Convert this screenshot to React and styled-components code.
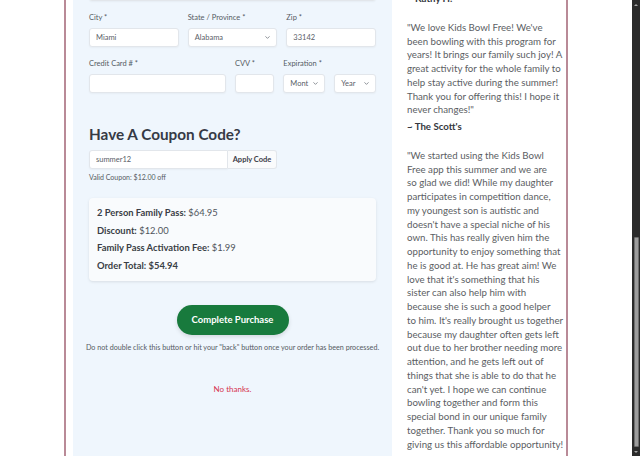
import React from 'react';
import styled, { createGlobalStyle } from 'styled-components';

const Global = createGlobalStyle`
  html, body { margin: 0; padding: 0; background: #fff; overflow: hidden; }
  body { font-family: Lato, "Noto Sans", sans-serif; }
  * { box-sizing: border-box; }
`;

const Shell = styled.div`
  display: flex;
  width: 640px;
  height: 456px;
  overflow: hidden;
  background: #fff;
`;

const Viewport = styled.div`
  flex: 1;
  overflow: hidden;
`;

const Container = styled.div`
  width: 504px;
  margin: -40px auto 0;
  border-left: 2px solid #b98a97;
  border-right: 2px solid #b98a97;
  padding-left: 7px;
  display: grid;
  grid-template-columns: 319px 1fr;
  min-height: 520px;
`;

const Panel = styled.div`
  background: #eff6fd;
  padding: 7px 16px 40px;
  display: flex;
  flex-direction: column;
`;

const Row = styled.div`
  display: grid;
  grid-template-columns: ${p => p.$cols || '1fr'};
  gap: 9px;
  margin-top: ${p => p.$mt || 0}px;
`;

const Field = styled.div`
  display: flex;
  flex-direction: column;
  min-width: 0;
`;

const Label = styled.label`
  font-size: 7.5px;
  line-height: 10px;
  color: #555b63;
  margin-bottom: 5px;
  white-space: nowrap;
`;

const Input = styled.input`
  height: 19px;
  width: 100%;
  border: 1px solid #e2e6eb;
  border-radius: ${p => p.$radius || '3px'};
  background: #fff;
  box-shadow: 0 1px 2px rgba(0, 0, 0, 0.04);
  font-family: inherit;
  font-size: 7.5px;
  color: #5a6068;
  padding: 0 6px;
  outline: none;
`;

const Select = styled.div`
  height: 19px;
  border: 1px solid #e2e6eb;
  border-radius: 3px;
  background: #fff;
  box-shadow: 0 1px 2px rgba(0, 0, 0, 0.04);
  font-size: 7.5px;
  color: #5a6068;
  padding: 0 5px 0 6px;
  display: flex;
  align-items: center;
  justify-content: space-between;
  gap: 3px;
  overflow: hidden;
  white-space: nowrap;
`;

const Chevron = () => (
  <svg width="7" height="7" viewBox="0 0 24 24" fill="none" stroke="#6b7078" strokeWidth="2.6" strokeLinecap="round" strokeLinejoin="round" style={{ flexShrink: 0 }}>
    <path d="m6 9 6 6 6-6" />
  </svg>
);

const Heading = styled.h2`
  margin: 32px 0 0;
  font-size: 15.3px;
  line-height: 18px;
  font-weight: 700;
  color: #363a45;
`;

const CouponRow = styled.div`
  display: flex;
  width: 188px;
  margin-top: 7px;
`;

const ApplyButton = styled.button`
  height: 19px;
  flex: 0 0 49px;
  border: 1px solid #e2e6eb;
  border-left: none;
  border-radius: 0 3px 3px 0;
  background: #fafbfc;
  font-family: inherit;
  font-size: 7.5px;
  font-weight: 700;
  color: #3c4048;
  padding: 0;
  white-space: nowrap;
`;

const Hint = styled.div`
  margin-top: 3px;
  font-size: 7px;
  line-height: 10px;
  color: #555b63;
`;

const SummaryCard = styled.div`
  margin-top: 16px;
  background: #f9fbfd;
  border-radius: 4px;
  box-shadow: 0 1px 3px rgba(0, 0, 0, 0.1);
  padding: 6px 8px;
`;

const SummaryLine = styled.div`
  font-size: 9.4px;
  line-height: 17.7px;
  color: #50555c;
  b { color: #3a3e46; font-weight: 700; }
`;

const PurchaseButton = styled.button`
  align-self: center;
  margin-top: 24px;
  width: 112px;
  height: 30px;
  border: none;
  border-radius: 15px;
  background: #187a3d;
  box-shadow: 0 2px 4px rgba(0, 0, 0, 0.12);
  color: #fff;
  font-family: inherit;
  font-size: 9.5px;
  font-weight: 700;
`;

const Note = styled.p`
  margin: 8px -12px 0;
  text-align: center;
  font-size: 7.2px;
  line-height: 9px;
  color: #555b63;
  white-space: nowrap;
`;

const NoThanks = styled.a`
  margin-top: 32px;
  align-self: center;
  font-size: 8px;
  line-height: 10px;
  color: #d6334f;
  text-decoration: none;
`;

const Side = styled.div`
  background: #fff;
  padding: 32px 0 0 15px;
  overflow: hidden;
`;

const Testimonial = styled.div`
  margin-bottom: 15px;
`;

const Quote = styled.p`
  margin: 0;
  font-size: 9.7px;
  line-height: 13.75px;
  color: #5b5e63;
  white-space: pre;
`;

const Author = styled.div`
  margin-top: ${p => (p.$first ? 0 : 3)}px;
  font-size: 9.7px;
  line-height: 13.75px;
  font-weight: 700;
  color: #353840;
`;

const Scrollbar = styled.div`
  flex: 0 0 8px;
  background: #2b2b2b;
  display: flex;
  flex-direction: column;
  align-items: center;
`;

const Arrow = styled.div`
  flex: 0 0 ${p => p.$h}px;
  display: flex;
  align-items: center;
  justify-content: center;
  &::after {
    content: '';
    border-left: 2px solid transparent;
    border-right: 2px solid transparent;
    ${p => (p.$down ? 'border-top: 2px solid #a5a5a5;' : 'border-bottom: 2px solid #a5a5a5;')}
  }
`;

const TrackGap = styled.div`
  flex: 0 0 ${p => p.$h}px;
`;

const Thumb = styled.div`
  flex: 1;
  width: 5px;
  background: #9d9d9d;
  border: 1px solid #6e6e6e;
  border-radius: 1px;
`;

const quoteOne = [
  '"We love Kids Bowl Free! We\'ve',
  'been bowling with this program for',
  'years! It brings our family such joy! A',
  'great activity for the whole family to',
  'help stay active during the summer!',
  'Thank you for offering this! I hope it',
  'never changes!"',
].join('\n');

const quoteTwo = [
  '"We started using the Kids Bowl',
  'Free app this summer and we are',
  'so glad we did! While my daughter',
  'participates in competition dance,',
  'my youngest son is autistic and',
  "doesn't have a special niche of his",
  'own. This has really given him the',
  'opportunity to enjoy something that',
  'he is good at. He has great aim! We',
  "love that it's something that his",
  'sister can also help him with',
  'because she is such a good helper',
  "to him. It's really brought us together",
  'because my daughter often gets left',
  'out due to her brother needing more',
  'attention, and he gets left out of',
  'things that she is able to do that he',
  "can't yet. I hope we can continue",
  'bowling together and form this',
  'special bond in our unique family',
  'together. Thank you so much for',
  'giving us this affordable opportunity!',
].join('\n');

export default function App() {
  return (
    <>
      <Global />
      <Shell>
        <Viewport>
          <Container>
            <Panel>
              <Row>
                <Field>
                  <Label>Address *</Label>
                  <Input defaultValue="" />
                </Field>
              </Row>
              <Row $cols="1fr 1fr 1fr" $mt={12}>
                <Field>
                  <Label>City *</Label>
                  <Input defaultValue="Miami" />
                </Field>
                <Field>
                  <Label>State / Province *</Label>
                  <Select>
                    <span>Alabama</span>
                    <Chevron />
                  </Select>
                </Field>
                <Field>
                  <Label>Zip *</Label>
                  <Input defaultValue="33142" />
                </Field>
              </Row>
              <Row $cols="2fr 1fr" $mt={12}>
                <Row $cols="139fr 40fr">
                  <Field>
                    <Label>Credit Card # *</Label>
                    <Input defaultValue="" />
                  </Field>
                  <Field>
                    <Label>CVV *</Label>
                    <Input defaultValue="" />
                  </Field>
                </Row>
                <Field>
                  <Label>Expiration *</Label>
                  <Row $cols="1fr 1fr">
                    <Select>
                      <span>Mont</span>
                      <Chevron />
                    </Select>
                    <Select>
                      <span>Year</span>
                      <Chevron />
                    </Select>
                  </Row>
                </Field>
              </Row>

              <Heading>Have A Coupon Code?</Heading>
              <CouponRow>
                <Input defaultValue="summer12" $radius="3px 0 0 3px" />
                <ApplyButton>Apply Code</ApplyButton>
              </CouponRow>
              <Hint>Valid Coupon: $12.00 off</Hint>

              <SummaryCard>
                <SummaryLine><b>2 Person Family Pass:</b> $64.95</SummaryLine>
                <SummaryLine><b>Discount:</b> $12.00</SummaryLine>
                <SummaryLine><b>Family Pass Activation Fee:</b> $1.99</SummaryLine>
                <SummaryLine><b>Order Total: $54.94</b></SummaryLine>
              </SummaryCard>

              <PurchaseButton>Complete Purchase</PurchaseButton>
              <Note>Do not double click this button or hit your "back" button once your order has been processed.</Note>
              <NoThanks href="#">No thanks.</NoThanks>
            </Panel>

            <Side>
              <Testimonial>
                <Author $first>~ Kathy H.</Author>
              </Testimonial>
              <Testimonial>
                <Quote>{quoteOne}</Quote>
                <Author>~ The Scott's</Author>
              </Testimonial>
              <Testimonial>
                <Quote>{quoteTwo}</Quote>
              </Testimonial>
            </Side>
          </Container>
        </Viewport>
        <Scrollbar>
          <Arrow $h={9} />
          <TrackGap $h={228} />
          <Thumb />
          <Arrow $h={9} $down />
        </Scrollbar>
      </Shell>
    </>
  );
}
